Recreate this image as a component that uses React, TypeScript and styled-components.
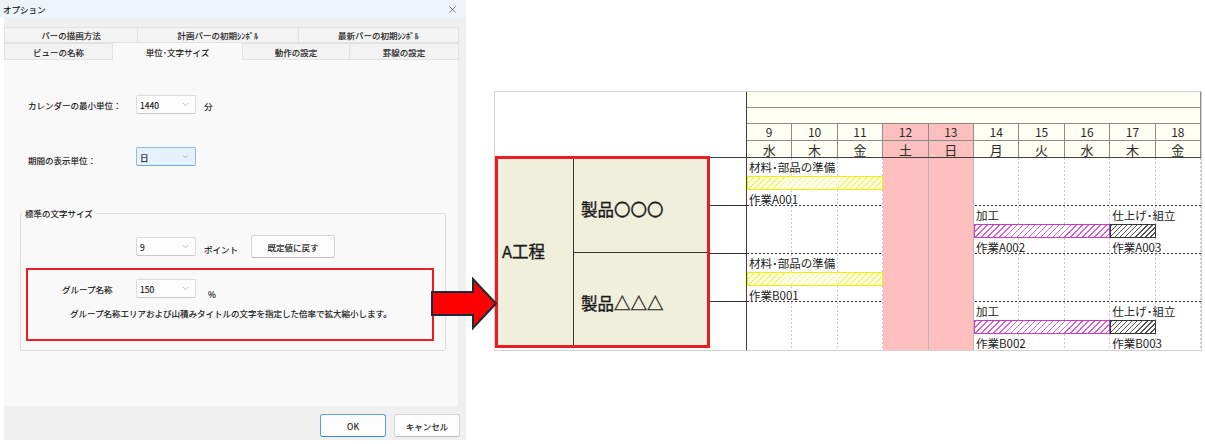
import styled, { createGlobalStyle } from "styled-components";
import { ChevronDown, X } from "lucide-react";

const JP = `"Noto Sans CJK JP", "Noto Sans", sans-serif`;

const GlobalStyle = createGlobalStyle`
  html, body {
    margin: 0;
    padding: 0;
    background: #ffffff;
  }
  body {
    font-family: ${JP};
    color: #111;
  }
  * {
    box-sizing: border-box;
  }
`;

const Page = styled.div`
  position: relative;
  width: 1205px;
  height: 444px;
  display: flex;
  align-items: flex-start;
  overflow: hidden;
`;

/* ---------- dialog ---------- */

const Dialog = styled.div`
  width: 466px;
  height: 440px;
  display: flex;
  flex-direction: column;
  font-size: 8.5px;
  line-height: 12px;
  -webkit-text-stroke: 0.15px #111;
`;

const TitleBar = styled.div`
  height: 18px;
  background: #eef4f9;
  display: flex;
  align-items: center;
  justify-content: space-between;
  padding: 0 8px 0 3px;
`;

const DialogBody = styled.div`
  flex: 1;
  margin-left: 4px;
  background: #f0f0f0;
  display: flex;
  flex-direction: column;
  padding-top: 9px;
`;

const TabRow = styled.div<{ $h: number }>`
  display: flex;
  height: ${(p) => p.$h}px;
  width: 455px;
  align-items: flex-end;
`;

const Tab = styled.div<{ $w: number; $active?: boolean }>`
  width: ${(p) => p.$w}px;
  height: ${(p) => (p.$active ? "calc(100% + 1px)" : "100%")};
  display: flex;
  align-items: center;
  justify-content: center;
  background: ${(p) => (p.$active ? "#f9f9f9" : "#f3f3f3")};
  border: 1px solid #e2e2e2;
  border-bottom: ${(p) => (p.$active ? "none" : "1px solid #e2e2e2")};
  margin-left: -1px;
  &:first-child {
    margin-left: 0;
  }
`;

const Panel = styled.div`
  width: 455px;
  height: 346px;
  background: #f9f9f9;
  border-right: 1px solid #ececec;
  padding-top: 35px;
  display: flex;
  flex-direction: column;
`;

const FieldRow = styled.div<{ $pl: number; $mt?: number }>`
  display: flex;
  align-items: center;
  padding-left: ${(p) => p.$pl}px;
  margin-top: ${(p) => p.$mt ?? 0}px;
`;

const Label = styled.span<{ $w: number; $dy?: number }>`
  width: ${(p) => p.$w}px;
  position: relative;
  top: ${(p) => p.$dy ?? 0}px;
`;

const Unit = styled.span<{ $ml: number; $dy?: number }>`
  margin-left: ${(p) => p.$ml}px;
  position: relative;
  top: ${(p) => p.$dy ?? 0}px;
`;

const SelectBox = styled.div<{ $focused?: boolean }>`
  width: 60px;
  height: 19px;
  border: 1px solid ${(p) => (p.$focused ? "#8dbbe6" : "#dadada")};
  border-bottom-color: ${(p) => (p.$focused ? "#6ea6da" : "#c8c8c8")};
  background: ${(p) => (p.$focused ? "#e5f1fb" : "#fdfdfd")};
  border-radius: 2px;
  display: flex;
  align-items: center;
  justify-content: space-between;
  padding: 0 5px 0 3px;
  color: #111;
`;

const Select = ({ value, focused }: { value: string; focused?: boolean }) => (
  <SelectBox $focused={focused}>
    <span>{value}</span>
    <ChevronDown size={9} strokeWidth={1.4} color="#8a8a8a" />
  </SelectBox>
);

const GroupBox = styled.fieldset`
  margin: 41px 0 0 16px;
  padding: 0 0 9px 0;
  width: 426px;
  border: 1px solid #dedede;
  border-radius: 2px;
  min-width: 0;
`;

const Legend = styled.legend`
  padding: 0 3px;
  margin-left: 1px;
  line-height: 12px;
`;

const PushButton = styled.button<{ $w: number; $primary?: boolean; $ml?: number }>`
  width: ${(p) => p.$w}px;
  height: 23px;
  margin-left: ${(p) => p.$ml ?? 0}px;
  font-family: ${JP};
  font-size: 8.5px;
  color: #111;
  -webkit-text-stroke: 0.15px #111;
  background: #fdfdfd;
  border: 1px solid ${(p) => (p.$primary ? "#5b9fd9" : "#d3d3d3")};
  border-bottom-color: ${(p) => (p.$primary ? "#3d86c9" : "#bdbdbd")};
  border-radius: 3px;
  padding: 0;
`;

const HighlightBox = styled.div`
  margin: 10px 0 0 5px;
  width: 408px;
  height: 73px;
  border: 2px solid #ec1c24;
  padding-top: 9px;
  display: flex;
  flex-direction: column;
`;

const Note = styled.div`
  padding-left: 42px;
  margin-top: 9px;
`;

const Footer = styled.div`
  height: 34px;
  display: flex;
  justify-content: flex-end;
  gap: 8px;
  padding: 8px 6px 0 0;
`;

/* ---------- arrow ---------- */

const ArrowWrap = styled.svg`
  position: absolute;
  left: 431px;
  top: 269px;
  z-index: 2;
`;

/* ---------- chart ---------- */

const Chart = styled.div`
  margin: 91px 0 0 28px;
  width: 708px;
  height: 260px;
  border: 1px solid #d2d2d2;
  display: grid;
  grid-template-columns: 251px 455px;
  grid-template-rows: 66px 192px;
  font-family: ${JP};
  color: #1a1a1a;
`;

const HeaderBlank = styled.div`
  background: #fff;
  border-bottom: 1px solid #404040;
`;

const TimeHeader = styled.div`
  border-left: 1px solid #404040;
  border-bottom: 1px solid #404040;
  display: grid;
  grid-template-columns: repeat(10, 1fr);
  grid-template-rows: 16px 16px 17px 16px;
`;

const Band = styled.div`
  grid-column: 1 / -1;
  background: #fffff3;
  border-bottom: 1px solid #8c8c8c;
  border-right: 1px solid #8c8c8c;
`;

const DayCell = styled.div<{ $off?: boolean; $kanji?: boolean }>`
  background: ${(p) => (p.$off ? "#ffbfbf" : "#fffff3")};
  border-right: 1px solid #8c8c8c;
  border-bottom: ${(p) => (p.$kanji ? "none" : "1px solid #8c8c8c")};
  display: flex;
  align-items: center;
  justify-content: center;
  font-size: ${(p) => (p.$kanji ? 13 : 12)}px;
  line-height: 1;
  color: #2a2a2a;
`;

const BodyLeft = styled.div`
  display: flex;
  background: #fff;
`;

const GroupFrame = styled.div`
  position: relative;
  z-index: 1;
  margin-top: -2px;
  width: 215px;
  height: 192px;
  border: 3px solid #ec1c24;
  background: #f0efdc;
  display: grid;
  grid-template-columns: 76px 1fr;
`;

const ProcessCell = styled.div`
  border-right: 1px solid #333;
  display: flex;
  align-items: center;
  padding: 0 0 2px 4px;
  font-size: 16.5px;
  -webkit-text-stroke: 0.35px #1a1a1a;
`;

const Products = styled.div`
  display: flex;
  flex-direction: column;
`;

const ProductCell = styled.div`
  flex: 1;
  display: flex;
  align-items: center;
  padding: 8px 0 0 7px;
  font-size: 16.5px;
  -webkit-text-stroke: 0.35px #1a1a1a;
  & + & {
    border-top: 1px solid #333;
  }
`;

const Connector = styled.div`
  flex: 1;
  display: grid;
  grid-template-rows: repeat(4, 48px);
`;

const ConnectorRow = styled.div`
  border-bottom: 1px solid #333;
  &:last-child {
    border-bottom: none;
  }
`;

const TimeBody = styled.div`
  border-left: 1px solid #404040;
  display: grid;
  grid-template-columns: repeat(10, 1fr);
  grid-template-rows: repeat(4, 48px);
`;

const RowLine = styled.div<{ $row: number; $last?: boolean }>`
  grid-column: 1 / -1;
  grid-row: ${(p) => p.$row};
  background: ${(p) =>
    p.$last
      ? "none"
      : "linear-gradient(to right, #333 50%, transparent 50%) left bottom / 4px 1px repeat-x"};
`;

const DayColumn = styled.div<{ $col: number; $off?: boolean }>`
  grid-row: 1 / -1;
  grid-column: ${(p) => p.$col};
  background: ${(p) =>
    p.$off
      ? "#ffbfbf"
      : "linear-gradient(#c9c9c9 50%, transparent 50%) right top / 1px 4px repeat-y"};
  border-right: ${(p) => (p.$off ? "1px solid #b8b8b8" : "none")};
`;

const Task = styled.div<{ $row: number; $start: number; $span: number }>`
  grid-row: ${(p) => p.$row};
  grid-column: ${(p) => p.$start} / span ${(p) => p.$span};
  display: flex;
  flex-direction: column;
  padding-top: 3px;
  min-width: 0;
  font-size: 11.5px;
  line-height: 13px;
  white-space: nowrap;
`;

const TaskLabel = styled.span<{ $mt?: number }>`
  padding-left: 2px;
  margin-top: ${(p) => p.$mt ?? 0}px;
  color: #1a1a1a;
`;

const barColors = {
  prep: { border: "#f0f000", stripe: "#f4f455", bg: "#fffff6", gap: 4.2 },
  work: { border: "#c43cc4", stripe: "#d862d8", bg: "#ffffff", gap: 4.2 },
  finish: { border: "#333333", stripe: "#555555", bg: "#ffffff", gap: 3.6 },
};

type Kind = keyof typeof barColors;

const Bar = styled.div<{ $kind: Kind }>`
  height: 14px;
  margin-top: 2px;
  border: 1px solid ${(p) => barColors[p.$kind].border};
  background: repeating-linear-gradient(
    135deg,
    ${(p) => barColors[p.$kind].stripe} 0 1px,
    ${(p) => barColors[p.$kind].bg} 1px ${(p) => barColors[p.$kind].gap}px
  );
`;

const days = [
  { d: 9, w: "水" },
  { d: 10, w: "木" },
  { d: 11, w: "金" },
  { d: 12, w: "土", off: true },
  { d: 13, w: "日", off: true },
  { d: 14, w: "月" },
  { d: 15, w: "火" },
  { d: 16, w: "水" },
  { d: 17, w: "木" },
  { d: 18, w: "金" },
];

const tasks: { row: number; start: number; span: number; top: string; bottom: string; kind: Kind }[] = [
  { row: 1, start: 1, span: 3, top: "材料･部品の準備", bottom: "作業A001", kind: "prep" },
  { row: 2, start: 6, span: 3, top: "加工", bottom: "作業A002", kind: "work" },
  { row: 2, start: 9, span: 1, top: "仕上げ･組立", bottom: "作業A003", kind: "finish" },
  { row: 3, start: 1, span: 3, top: "材料･部品の準備", bottom: "作業B001", kind: "prep" },
  { row: 4, start: 6, span: 3, top: "加工", bottom: "作業B002", kind: "work" },
  { row: 4, start: 9, span: 1, top: "仕上げ･組立", bottom: "作業B003", kind: "finish" },
];

function OptionDialog() {
  return (
    <Dialog>
      <TitleBar>
        <span>オプション</span>
        <X size={11} strokeWidth={1.3} color="#333" />
      </TitleBar>
      <DialogBody>
        <TabRow $h={16}>
          <Tab $w={134}>バーの描画方法</Tab>
          <Tab $w={162}>計画バーの初期ｼﾝﾎﾞﾙ</Tab>
          <Tab $w={161}>最新バーの初期ｼﾝﾎﾞﾙ</Tab>
        </TabRow>
        <TabRow $h={17}>
          <Tab $w={109}>ビューの名称</Tab>
          <Tab $w={131} $active>
            単位･文字サイズ
          </Tab>
          <Tab $w={108}>動作の設定</Tab>
          <Tab $w={110}>罫線の設定</Tab>
        </TabRow>
        <Panel>
          <FieldRow $pl={24}>
            <Label $w={108}>カレンダーの最小単位：</Label>
            <Select value="1440" />
            <Unit $ml={8} $dy={1}>
              分
            </Unit>
          </FieldRow>
          <FieldRow $pl={24} $mt={33}>
            <Label $w={108} $dy={3}>
              期間の表示単位：
            </Label>
            <Select value="日" focused />
          </FieldRow>
          <GroupBox>
            <Legend>標準の文字サイズ</Legend>
            <FieldRow $pl={115} $mt={16}>
              <Select value="9" />
              <Unit $ml={8} $dy={2}>
                ポイント
              </Unit>
              <PushButton $w={84} $ml={13}>
                既定値に戻す
              </PushButton>
            </FieldRow>
            <HighlightBox>
              <FieldRow $pl={34}>
                <Label $w={74}>グループ名称</Label>
                <Select value="150" />
                <Unit $ml={12} $dy={5}>
                  %
                </Unit>
              </FieldRow>
              <Note>グループ名称エリアおよび山積みタイトルの文字を指定した倍率で拡大縮小します。</Note>
            </HighlightBox>
          </GroupBox>
        </Panel>
        <Footer>
          <PushButton $w={66} $primary>
            OK
          </PushButton>
          <PushButton $w={66}>キャンセル</PushButton>
        </Footer>
      </DialogBody>
    </Dialog>
  );
}

function GanttChart() {
  return (
    <Chart>
      <HeaderBlank />
      <TimeHeader>
        <Band />
        <Band />
        {days.map((d) => (
          <DayCell key={`n${d.d}`} $off={d.off}>
            {d.d}
          </DayCell>
        ))}
        {days.map((d) => (
          <DayCell key={`w${d.d}`} $off={d.off} $kanji>
            {d.w}
          </DayCell>
        ))}
      </TimeHeader>
      <BodyLeft>
        <GroupFrame>
          <ProcessCell>A工程</ProcessCell>
          <Products>
            <ProductCell>製品〇〇〇</ProductCell>
            <ProductCell>製品△△△</ProductCell>
          </Products>
        </GroupFrame>
        <Connector>
          <ConnectorRow />
          <ConnectorRow />
          <ConnectorRow />
          <ConnectorRow />
        </Connector>
      </BodyLeft>
      <TimeBody>
        {[1, 2, 3, 4].map((r) => (
          <RowLine key={r} $row={r} $last={r === 4} />
        ))}
        {days.map((d, i) => (
          <DayColumn key={d.d} $col={i + 1} $off={d.off} />
        ))}
        {tasks.map((t) => (
          <Task key={t.bottom} $row={t.row} $start={t.start} $span={t.span}>
            <TaskLabel>{t.top}</TaskLabel>
            <Bar $kind={t.kind} />
            <TaskLabel $mt={3}>{t.bottom}</TaskLabel>
          </Task>
        ))}
      </TimeBody>
    </Chart>
  );
}

export default function App() {
  return (
    <Page>
      <GlobalStyle />
      <OptionDialog />
      <GanttChart />
      <ArrowWrap width="68" height="64" viewBox="0 0 68 64">
        <polygon
          points="1,23 42,23 42,10 65,34.5 42,59 42,46 1,46"
          fill="#ff0000"
          stroke="#1c2b38"
          strokeWidth="2"
          strokeLinejoin="miter"
        />
      </ArrowWrap>
    </Page>
  );
}
